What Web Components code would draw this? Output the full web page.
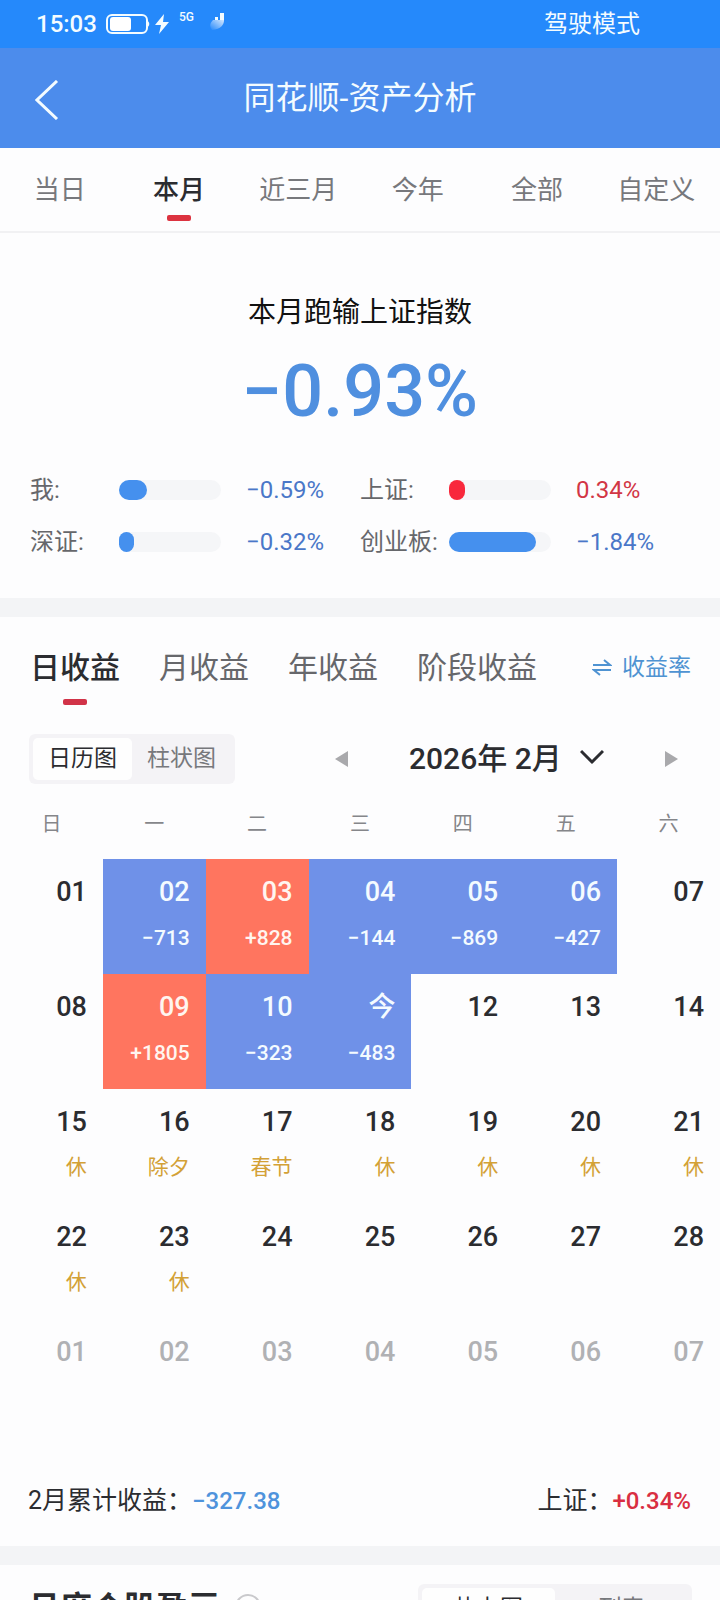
<!DOCTYPE html>
<html lang="zh-CN">
<head>
<meta charset="UTF-8">
<meta name="viewport" content="width=device-width, initial-scale=1">
<title>同花顺-资产分析</title>
<style>
    body{
        margin: 0;
        background: #fdfdfe;
        color: #2b2c30;
        font-family: Roboto, "Noto Sans CJK SC", sans-serif;
    }
</style>
</head>
<body>
<asset-page></asset-page>

<script>
// spacing is reset on native tags only, so that each :host keeps its own
const base = `
    <style>
        *{
            box-sizing: border-box;
        }
        h1, h2, p, button, select, th, td{
            margin: 0;
            padding: 0;
        }
        button, select{
            font: inherit;
            color: inherit;
            background: none;
            border: 0;
            cursor: pointer;
        }
        svg{
            display: block;
            flex: none;
        }
    </style>
`;

function render(element, html) {
    const template = document.createElement('template');
    template.innerHTML = base + html;
    element.attachShadow({ mode: 'open' });
    element.shadowRoot.appendChild(template.content.cloneNode(true));
}

class StatusBar extends HTMLElement{
    constructor() {
        super();
        render(this, `
            <style>
                :host{
                    display: flex;
                    align-items: center;
                    height: 48px;
                    padding: 0 80px 0 36px;
                    background: #2589fb;
                    color: #f4fcff;
                    font-size: 24px;
                    line-height: 32px;
                }
                time{
                    font-weight: 500;
                    margin-right: 9px;
                }
                .bolt{
                    margin-left: 2px;
                }
                .network{
                    align-self: flex-start;
                    margin: 11px 0 0 7px;
                    font-size: 12px;
                    line-height: 12px;
                    font-weight: 500;
                }
                .signal{
                    margin-left: 15px;
                }
                .mode{
                    margin-left: auto;
                }
            </style>
            <time>15:03</time>
            <svg width="44" height="20" viewBox="0 0 44 20">
                <rect x="1" y="1" width="40" height="18" rx="5" fill="none" stroke="#f4fcff" stroke-width="2"/>
                <rect x="4" y="3" width="21" height="14" rx="3" fill="#fff"/>
                <path d="M41 7c3 0 3 6 0 6z" fill="#f4fcff"/>
            </svg>
            <svg class="bolt" width="20" height="20" viewBox="0 0 20 20"><path d="M12 0 3 11h6l-2 9 10-12h-6z" fill="#f4fcff"/></svg>
            <span class="network">5G</span>
            <svg class="signal" width="18" height="24" viewBox="0 0 18 24">
                <defs>
                    <linearGradient id="fade" x1="1" y1="0" x2="0" y2="1">
                        <stop offset="0" stop-color="#fff" stop-opacity=".8"/>
                        <stop offset="1" stop-color="#fff" stop-opacity="0"/>
                    </linearGradient>
                </defs>
                <path d="M6 5h3v3H6zM11 1h4v7h-4z" fill="#f4fcff"/>
                <path d="M4 8h11c0 5-3 9-12 10-3-4-2-7 1-10z" fill="url(#fade)"/>
            </svg>
            <span class="mode">驾驶模式</span>
        `);
    }
}

class NavBar extends HTMLElement{
    constructor() {
        super();
        render(this, `
            <style>
                :host{
                    display: grid;
                    grid-template-columns: 60px 1fr 60px;
                    align-items: center;
                    height: 100px;
                    background: #4c8cec;
                    color: #f4fcff;
                }
                button{
                    padding: 4px 0 0 35px;
                }
                h1{
                    font-size: 32px;
                    line-height: 40px;
                    font-weight: 400;
                    text-align: center;
                }
            </style>
            <button aria-label="返回">
                <svg width="24" height="40" viewBox="0 0 24 40"><path d="M22 1 2 20l20 19" fill="none" stroke="#f4fcff" stroke-width="3"/></svg>
            </button>
            <h1><slot></slot></h1>
        `);
    }
}

class RangeTabs extends HTMLElement{
    constructor() {
        super();
        const tabs = this.getAttribute('tabs').split(',');
        const active = this.getAttribute('active');
        render(this, `
            <style>
                :host{
                    display: grid;
                    grid-template-columns: repeat(6, 1fr);
                    height: 85px;
                    padding-right: 4px;
                    border-bottom: 2px solid #f1f1f3;
                }
                button{
                    display: flex;
                    flex-direction: column;
                    align-items: center;
                    padding-top: 22px;
                    font-size: 26px;
                    line-height: 40px;
                    color: #77787c;
                }
                .active{
                    color: #2b2c30;
                    font-weight: 500;
                }
                .active::after{
                    content: '';
                    width: 24px;
                    height: 6px;
                    margin-top: 5px;
                    border-radius: 2px;
                    background: #dc3340;
                }
            </style>
            ${tabs.map(tab => `<button class="${tab === active ? 'active' : ''}">${tab}</button>`).join('')}
        `);
    }
}

class IndexMeter extends HTMLElement{
    constructor() {
        super();
        const up = this.hasAttribute('up');
        render(this, `
            <style>
                :host{
                    display: grid;
                    grid-template-columns: 89px 102px 1fr;
                    align-items: center;
                    height: 52px;
                    font-size: 24px;
                    line-height: 32px;
                }
                .label{
                    color: #66676b;
                    white-space: nowrap;
                }
                .track{
                    height: 20px;
                    border-radius: 10px;
                    background: #f5f6f8;
                }
                .fill{
                    height: 20px;
                    width: ${this.getAttribute('level')}%;
                    border-radius: 10px;
                    background: ${up ? '#f8283c' : '#4590ee'};
                }
                .value{
                    padding-left: 25px;
                    color: ${up ? '#d23645' : '#4a77c8'};
                }
            </style>
            <span class="label">${this.getAttribute('label')}:</span>
            <div class="track"><div class="fill"></div></div>
            <span class="value"><slot></slot></span>
        `);
    }
}

class MonthSummary extends HTMLElement{
    constructor() {
        super();
        render(this, `
            <style>
                :host{
                    display: block;
                    padding: 60px 30px 30px;
                    text-align: center;
                }
                h2{
                    font-size: 28px;
                    line-height: 40px;
                    font-weight: 400;
                    color: #111;
                }
                .rate{
                    margin: 17px 0 30px;
                    font-size: 72px;
                    line-height: 84px;
                    font-weight: 500;
                    color: #4f8fdf;
                }
                .meters{
                    display: grid;
                    grid-template-columns: 1fr 1fr;
                    text-align: left;
                }
            </style>
            <h2>本月跑输上证指数</h2>
            <p class="rate">−0.93%</p>
            <div class="meters">
                <index-meter label="我" level="27">−0.59%</index-meter>
                <index-meter label="上证" level="16" up>0.34%</index-meter>
                <index-meter label="深证" level="15">−0.32%</index-meter>
                <index-meter label="创业板" level="85">−1.84%</index-meter>
            </div>
        `);
    }
}

class SectionGap extends HTMLElement{
    constructor() {
        super();
        render(this, `
            <style>
                :host{
                    display: block;
                    height: 19px;
                    background: #f3f4f6;
                }
            </style>
        `);
    }
}

class ProfitTabs extends HTMLElement{
    constructor() {
        super();
        render(this, `
            <style>
                :host{
                    display: flex;
                    align-items: flex-start;
                    gap: 39px;
                    height: 117px;
                    padding: 31px 29px 0 30px;
                    font-size: 30px;
                    line-height: 40px;
                    color: #66676b;
                }
                button{
                    display: flex;
                    flex-direction: column;
                    align-items: center;
                    white-space: nowrap;
                }
                .active{
                    color: #2b2c30;
                    font-weight: 500;
                }
                .active::after{
                    content: '';
                    width: 24px;
                    height: 6px;
                    margin-top: 11px;
                    border-radius: 2px;
                    background: #d13348;
                }
                .switch{
                    flex-direction: row;
                    gap: 10px;
                    margin-left: auto;
                    font-size: 23px;
                    color: #4f93d2;
                }
            </style>
            <button class="active">日收益</button>
            <button>月收益</button>
            <button>年收益</button>
            <button>阶段收益</button>
            <button class="switch">
                <svg width="20" height="18" viewBox="0 0 20 18"><path d="M1 6h17l-6-5M19 11H2l6 5" fill="none" stroke="#4f93d2" stroke-width="2"/></svg>
                收益率
            </button>
        `);
    }
}

class SegmentControl extends HTMLElement{
    constructor() {
        super();
        const options = this.getAttribute('options').split(',');
        render(this, `
            <style>
                :host{
                    display: flex;
                    height: 50px;
                    padding: 4px;
                    border-radius: 6px;
                    background: #f4f3f6;
                    font-size: 23px;
                    line-height: 40px;
                    color: #77787c;
                }
                button{
                    flex: 1;
                    padding: 0 15px;
                    border-radius: 5px;
                    white-space: nowrap;
                }
                button:first-of-type{
                    background: #fefefe;
                    color: #2b2c30;
                }
            </style>
            ${options.map(option => `<button>${option}</button>`).join('')}
        `);
    }
}

class MonthPicker extends HTMLElement{
    constructor() {
        super();
        render(this, `
            <style>
                :host{
                    display: flex;
                    justify-content: space-between;
                    align-items: center;
                }
                label{
                    display: grid;
                    align-items: center;
                }
                select, label svg{
                    grid-area: 1 / 1;
                }
                select{
                    appearance: none;
                    padding-right: 42px;
                    font-size: 30px;
                    line-height: 40px;
                    font-weight: 500;
                    color: #2b2c30;
                }
                label svg{
                    justify-self: end;
                    margin-bottom: 4px;
                    pointer-events: none;
                }
            </style>
            <button aria-label="上个月">
                <svg width="13" height="16" viewBox="0 0 13 16"><path d="M13 0v16L0 8z" fill="#a9a9ac"/></svg>
            </button>
            <label>
                <select aria-label="月份">
                    <option>2026年 1月</option>
                    <option selected>2026年 2月</option>
                </select>
                <svg width="24" height="16" viewBox="0 0 24 16"><path d="m1 2 11 11L23 2" fill="none" stroke="#2b2c30" stroke-width="3"/></svg>
            </label>
            <button aria-label="下个月">
                <svg width="13" height="16" viewBox="0 0 13 16"><path d="M0 0v16l13-8z" fill="#a9a9ac"/></svg>
            </button>
        `);
    }
}

class CalendarDay extends HTMLElement{
    constructor() {
        super();
        render(this, `
            <style>
                :host{
                    display: block;
                    height: 115px;
                    padding: 13px 16px 0 0;
                    text-align: right;
                    color: #2b2c30;
                }
                :host([kind=down]){
                    background: #6f91e8;
                    color: #f4fbff;
                }
                :host([kind=up]){
                    background: #ff755f;
                    color: #fff5f0;
                }
                :host([kind=other]){
                    color: #b0b1b4;
                }
                .day{
                    font-size: 27px;
                    line-height: 40px;
                    font-weight: 500;
                }
                .note{
                    margin-top: 10px;
                    font-size: 21px;
                    line-height: 32px;
                    font-weight: 500;
                }
                :host([kind=rest]) .note{
                    margin-top: 9px;
                    font-weight: 400;
                    color: #d3a136;
                }
            </style>
            <div class="day">${this.getAttribute('day')}</div>
            <div class="note"><slot></slot></div>
        `);
    }
}

// day, kind, note
const days = [
    ['01'], ['02', 'down', '−713'], ['03', 'up', '+828'], ['04', 'down', '−144'], ['05', 'down', '−869'], ['06', 'down', '−427'], ['07'],
    ['08'], ['09', 'up', '+1805'], ['10', 'down', '−323'], ['今', 'down', '−483'], ['12'], ['13'], ['14'],
    ['15', 'rest', '休'], ['16', 'rest', '除夕'], ['17', 'rest', '春节'], ['18', 'rest', '休'], ['19', 'rest', '休'], ['20', 'rest', '休'], ['21', 'rest', '休'],
    ['22', 'rest', '休'], ['23', 'rest', '休'], ['24'], ['25'], ['26'], ['27'], ['28'],
    ['01', 'other'], ['02', 'other'], ['03', 'other'], ['04', 'other'], ['05', 'other'], ['06', 'other'], ['07', 'other']
];

class ProfitCalendar extends HTMLElement{
    constructor() {
        super();
        let rows = '';
        for (let i = 0; i < days.length; i += 7) {
            rows += '<tr>' + days.slice(i, i + 7).map(([day, kind = '', note = '']) =>
                `<td><calendar-day day="${day}" kind="${kind}">${note}</calendar-day></td>`
            ).join('') + '</tr>';
        }
        render(this, `
            <style>
                :host{
                    display: block;
                }
                table{
                    width: 100%;
                    table-layout: fixed;
                    border-collapse: collapse;
                }
                th{
                    height: 75px;
                    padding-top: 4px;
                    font-size: 20px;
                    line-height: 32px;
                    font-weight: 400;
                    color: #85868a;
                }
            </style>
            <table>
                <thead><tr>${[...'日一二三四五六'].map(name => `<th>${name}</th>`).join('')}</tr></thead>
                <tbody>${rows}</tbody>
            </table>
        `);
    }
}

class MonthTotal extends HTMLElement{
    constructor() {
        super();
        render(this, `
            <style>
                :host{
                    display: flex;
                    justify-content: space-between;
                    height: 112px;
                    padding: 47px 29px 0 28px;
                    font-size: 25px;
                    line-height: 40px;
                }
                b{
                    font-size: 24px;
                    font-weight: 500;
                }
                .down{
                    color: #4f93dc;
                }
                .up{
                    color: #d92f42;
                }
            </style>
            <p>2月累计收益：<b class="down">−327.38</b></p>
            <p>上证：<b class="up">+0.34%</b></p>
        `);
    }
}

class StockSection extends HTMLElement{
    constructor() {
        super();
        render(this, `
            <style>
                :host{
                    display: flex;
                    align-items: flex-start;
                    padding: 19px 28px 40px;
                }
                h2{
                    font-size: 32px;
                    line-height: 48px;
                    font-weight: 700;
                }
                .help{
                    margin: 10px 0 0 15px;
                }
                segment-control{
                    width: 274px;
                    margin-left: auto;
                }
            </style>
            <h2>月度个股盈亏</h2>
            <button class="help" aria-label="说明">
                <svg width="26" height="26" viewBox="0 0 26 26"><circle cx="13" cy="13" r="12" fill="none" stroke="#c9c9cc" stroke-width="2"/><path d="M9 11a4 4 0 1 1 5 4l-1 2m0 2v2" fill="none" stroke="#c9c9cc" stroke-width="2"/></svg>
            </button>
            <segment-control options="热力图,列表"></segment-control>
        `);
    }
}

class AssetPage extends HTMLElement{
    constructor() {
        super();
        render(this, `
            <style>
                :host{
                    display: block;
                    height: 100vh;
                    overflow: hidden;
                }
                .toolbar{
                    display: flex;
                    padding: 0 42px 0 29px;
                }
                month-picker{
                    flex: 1;
                    margin-left: 100px;
                }
            </style>
            <status-bar></status-bar>
            <nav-bar>同花顺-资产分析</nav-bar>
            <range-tabs tabs="当日,本月,近三月,今年,全部,自定义" active="本月"></range-tabs>
            <month-summary></month-summary>
            <section-gap></section-gap>
            <profit-tabs></profit-tabs>
            <div class="toolbar">
                <segment-control options="日历图,柱状图"></segment-control>
                <month-picker></month-picker>
            </div>
            <profit-calendar></profit-calendar>
            <month-total></month-total>
            <section-gap></section-gap>
            <stock-section></stock-section>
        `);
    }
}

window.customElements.define('status-bar', StatusBar);
window.customElements.define('nav-bar', NavBar);
window.customElements.define('range-tabs', RangeTabs);
window.customElements.define('index-meter', IndexMeter);
window.customElements.define('month-summary', MonthSummary);
window.customElements.define('section-gap', SectionGap);
window.customElements.define('profit-tabs', ProfitTabs);
window.customElements.define('segment-control', SegmentControl);
window.customElements.define('month-picker', MonthPicker);
window.customElements.define('calendar-day', CalendarDay);
window.customElements.define('profit-calendar', ProfitCalendar);
window.customElements.define('month-total', MonthTotal);
window.customElements.define('stock-section', StockSection);
window.customElements.define('asset-page', AssetPage);
</script>
</body>
</html>
